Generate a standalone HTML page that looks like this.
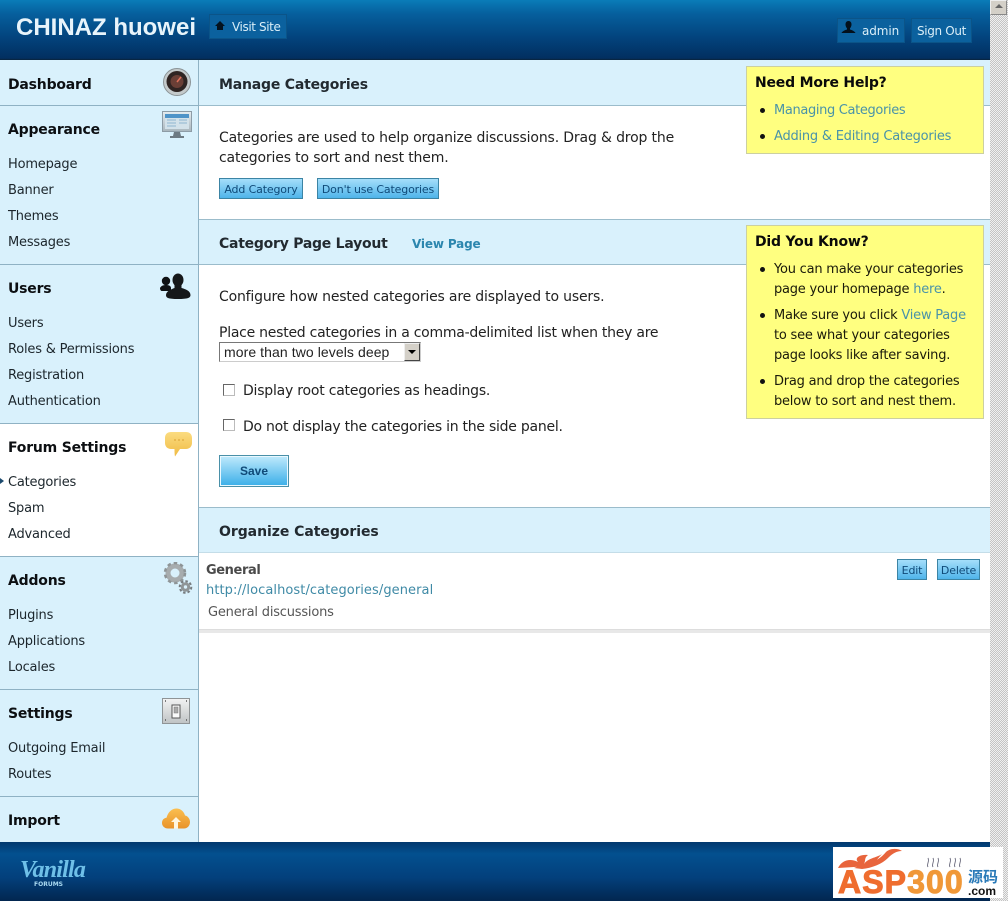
<!DOCTYPE html>
<html><head><meta charset="utf-8"><style>
html,body{margin:0;padding:0;width:1008px;height:901px;overflow:hidden;background:#fff}
body{font-family:"DejaVu Sans",sans-serif;position:relative;color:#222}
.a{position:absolute;white-space:nowrap}
.band{position:absolute;left:199px;width:791px;background:#d9f1fc;border-bottom:1px solid #9bbccb;box-sizing:border-box}
.side{position:absolute;left:0;width:198px;background:#d9f1fc;border-bottom:1px solid #8fb2c4;box-sizing:border-box}
.h{position:absolute;left:8px;font-weight:bold;font-size:14px;letter-spacing:-.2px;line-height:18px;color:#0c0f12;white-space:nowrap}
.l{position:absolute;left:8px;font-size:13px;letter-spacing:-.2px;line-height:16px;color:#1c262c;white-space:nowrap}
.mh{position:absolute;left:219px;font-weight:bold;font-size:14px;letter-spacing:-.2px;line-height:18px;color:#222a30;white-space:nowrap}
.t{position:absolute;font-size:14px;letter-spacing:-.2px;line-height:20px;color:#222;white-space:nowrap}
.btn{position:absolute;box-sizing:border-box;height:21px;border:1px solid #3c84a4;background:linear-gradient(#a5defa,#4fb4ea);color:#0f4a78;font-size:11px;letter-spacing:-.15px;line-height:21px;text-align:center;white-space:nowrap}
.hb{position:absolute;box-sizing:border-box;height:25px;background:#0b619e;border:1px solid #0b5488;color:#d9eef8;font-size:12px;line-height:24px;white-space:nowrap}
.note{position:absolute;left:746px;width:238px;box-sizing:border-box;background:#ffff80;border:1px solid #ccd0a0;color:#111}
.note b{position:absolute;left:8px;font-size:14px;letter-spacing:-.2px;line-height:18px;color:#0a0a0a;white-space:nowrap}
.note span.x{position:absolute;left:27px;font-size:13px;letter-spacing:-.22px;line-height:20px;white-space:nowrap;color:#1a1a0a}
.note i{position:absolute;left:13px;width:5px;height:5px;border-radius:50%;background:#111}
.note span.lk,.lk{color:#4a93a8}
.cb{position:absolute;left:223px;width:12px;height:12px;box-sizing:border-box;border:1px solid #666;border-right-color:#bbb;border-bottom-color:#bbb;background:#fff}
</style></head><body>
<div class="a" style="left:0;top:0;width:990px;height:60px;background:linear-gradient(#0a7cb8 0,#06609e 22%,#03457f 60%,#022f60 97%,#0a2238 100%)"></div>
<div class="a" style="left:16px;top:13px;font:bold 24px/30px 'Liberation Sans',sans-serif;color:#e8f4fb">CHINAZ huowei</div>
<div class="hb" style="left:209px;top:14px;width:78px;padding-left:22px;letter-spacing:-.4px">Visit Site</div>
<svg class="a" style="left:214px;top:20px" width="12" height="11" viewBox="0 0 12 11"><path d="M6 1 L11 6 H9 V10 H3 V6 H1 Z" fill="#04121e"/></svg>
<div class="hb" style="left:837px;top:18px;width:68px;padding-left:24px;letter-spacing:-.1px">admin</div>
<svg class="a" style="left:840px;top:20px" width="17" height="16" viewBox="0 0 17 16"><path d="M8.500 1c2 0 3 1.500 3 3.500 0 1.500-.7 3-1.500 3.800v1.200c2 .7 4.500 1.500 5.500 3.500H1.500c1-2 3.500-2.800 5.500-3.500V8.300C6.200 7.500 5.500 6 5.500 4.500 5.500 2.500 6.500 1 8.500 1z" fill="#03101c"/></svg>
<div class="hb" style="left:911px;top:18px;width:61px;text-align:center;letter-spacing:-.35px">Sign Out</div>

<div class="a" style="left:198px;top:60px;width:1px;height:782px;background:#8fb2c4"></div>
<div class="side" style="top:60px;height:46px"></div>
<div class="side" style="top:106px;height:159px"></div>
<div class="side" style="top:265px;height:159px"></div>
<div class="side" style="top:424px;height:133px;background:#fff"></div>
<div class="side" style="top:557px;height:133px"></div>
<div class="side" style="top:690px;height:107px"></div>
<div class="side" style="top:797px;height:45px;border-bottom:0"></div>

<div class="h" style="top:76px">Dashboard</div>
<div class="h" style="top:121px">Appearance</div>
<div class="l" style="top:157px">Homepage</div>
<div class="l" style="top:183px">Banner</div>
<div class="l" style="top:209px">Themes</div>
<div class="l" style="top:235px">Messages</div>
<div class="h" style="top:280px">Users</div>
<div class="l" style="top:316px">Users</div>
<div class="l" style="top:342px">Roles &amp; Permissions</div>
<div class="l" style="top:368px">Registration</div>
<div class="l" style="top:394px">Authentication</div>
<div class="h" style="top:439px">Forum Settings</div>
<div class="l" style="top:475px">Categories</div>
<div class="l" style="top:501px">Spam</div>
<div class="l" style="top:527px">Advanced</div>
<div class="h" style="top:572px">Addons</div>
<div class="l" style="top:608px">Plugins</div>
<div class="l" style="top:634px">Applications</div>
<div class="l" style="top:660px">Locales</div>
<div class="h" style="top:705px">Settings</div>
<div class="l" style="top:741px">Outgoing Email</div>
<div class="l" style="top:767px">Routes</div>
<div class="h" style="top:812px">Import</div>
<svg class="a" style="left:0;top:477px" width="4" height="8"><path d="M0 1 L4 4 L0 7Z" fill="#1c4a6e"/></svg>

<svg class="a" style="left:163px;top:68px" width="28" height="28" viewBox="0 0 28 28"><circle cx="14" cy="14" r="13.500" fill="#c4cacb" stroke="#8b9396"/><circle cx="14" cy="13.500" r="10.500" fill="#2f2422"/><circle cx="14" cy="13.500" r="6.500" fill="#6a3f36"/><path d="M14 14 L18 9" stroke="#e0705a" stroke-width="1.500"/></svg>
<svg class="a" style="left:162px;top:111px" width="30" height="28" viewBox="0 0 30 28"><defs><linearGradient id="m" x1="0" y1="0" x2="0" y2="1"><stop offset="0" stop-color="#e4ecf0"/><stop offset="1" stop-color="#a9b6bd"/></linearGradient></defs><rect x=".5" y=".5" width="29" height="20" fill="url(#m)" stroke="#8d9ca6"/><rect x="3" y="3" width="24" height="15" fill="#d3e2ea"/><rect x="3" y="3" width="24" height="4" fill="#4f94c8"/><path d="M5 9h9M5 12h9M5 15h9M17 9h8M17 12h8" stroke="#8fb6d0"/><path d="M12 21h6l1 4h3v2H8v-2h3z" fill="#6d7a82"/></svg>
<svg class="a" style="left:159px;top:273px" width="32" height="28" viewBox="0 0 32 28"><circle cx="7" cy="8" r="4.200" fill="#101214"/><path d="M1 15c1-2 3-3 6-3s5 1 5 3v3H3c-1 0-2-1-2-3z" fill="#101214"/><ellipse cx="19" cy="7" rx="5.500" ry="6.500" fill="#16181a"/><path d="M15.500 11h7v4c4 1 9 3 9 7 0 3-3 4-12.500 4S7 25 7 22c0-4 6-6 8.500-7z" fill="#16181a"/></svg>
<svg class="a" style="left:165px;top:432px" width="27" height="25" viewBox="0 0 27 25"><defs><linearGradient id="b" x1="0" y1="0" x2="0" y2="1"><stop offset="0" stop-color="#fbdc80"/><stop offset="1" stop-color="#f0bb44"/></linearGradient></defs><path d="M6 0h15c3.500 0 6 2 6 6v5c0 3.500-2.500 6-6 6h-6l-5 7.500c-.5-2-.5-5-.5-7.500H6c-3.500 0-6-2.500-6-6V6C0 2 2.500 0 6 0z" fill="url(#b)"/><path d="M9 8h2M13 8h2M17 8h2" stroke="#d89f32"/></svg>
<svg class="a" style="left:163px;top:562px" width="30" height="32" viewBox="0 0 30 32"><circle cx="12" cy="11" r="7" fill="none" stroke="#a7acae" stroke-width="5"/><circle cx="12" cy="11" r="10" fill="none" stroke="#8e9496" stroke-width="2.500" stroke-dasharray="3.500 3"/><circle cx="22.500" cy="25" r="3.200" fill="none" stroke="#8f9597" stroke-width="3"/><circle cx="22.500" cy="25" r="5.800" fill="none" stroke="#777d80" stroke-width="2" stroke-dasharray="2.500 2"/></svg>
<svg class="a" style="left:162px;top:698px" width="29" height="27" viewBox="0 0 29 27"><defs><linearGradient id="s" x1="0" y1="0" x2="0" y2="1"><stop offset="0" stop-color="#f2f3f3"/><stop offset="1" stop-color="#bfc3c4"/></linearGradient></defs><rect x=".5" y=".5" width="27" height="25" fill="url(#s)" stroke="#8f9496"/><rect x="10" y="7" width="8" height="13" fill="#fafafa" stroke="#555"/><rect x="12" y="9" width="4" height="6" fill="#aaa" stroke="#777" stroke-width=".5"/><path d="M3 3h1M24 3h1M3 22h1M24 22h1" stroke="#555" stroke-width="1.500"/></svg>
<svg class="a" style="left:162px;top:808px" width="28" height="21" viewBox="0 0 28 21"><defs><linearGradient id="c" x1="0" y1="0" x2="0" y2="1"><stop offset="0" stop-color="#fbbf50"/><stop offset="1" stop-color="#e8932a"/></linearGradient></defs><path d="M6 20.500C2.500 20.500 0 18 0 15c0-3 2-5 4.500-5.200C6 4 10 .5 14.500.5c4 0 7.500 3 8.500 7 3 .5 5 3.500 5 6.500 0 3.500-2.500 6.500-6 6.500z" fill="url(#c)"/><path d="M14 9l5 5h-3v6.500h-4V14H9z" fill="#fff6df"/></svg>

<div class="band" style="top:60px;height:46px"></div>
<div class="mh" style="top:76px">Manage Categories</div>
<div class="t" style="left:219px;top:128px;letter-spacing:-.15px">Categories are used to help organize discussions. Drag &amp; drop the</div>
<div class="t" style="left:219px;top:148px;letter-spacing:-.15px">categories to sort and nest them.</div>
<div class="btn" style="left:219px;top:178px;width:84px">Add Category</div>
<div class="btn" style="left:317px;top:178px;width:122px">Don't use Categories</div>

<div class="a" style="left:199px;top:219px;width:791px;height:1px;background:#9bbccb"></div>
<div class="band" style="top:220px;height:45px"></div>
<div class="mh" style="top:235px;letter-spacing:-.25px">Category Page Layout</div>
<div class="a" style="left:412px;top:236px;font-size:12px;letter-spacing:-.15px;line-height:16px;font-weight:bold;color:#2b86ae">View Page</div>
<div class="t" style="left:219px;top:287px;letter-spacing:-.18px">Configure how nested categories are displayed to users.</div>
<div class="t" style="left:219px;top:323px;letter-spacing:-.25px">Place nested categories in a comma-delimited list when they are</div>
<div class="a" style="left:219px;top:342px;width:202px;height:20px;box-sizing:border-box;border:1px solid #777;border-right-color:#ccc;border-bottom-color:#ccc;background:#fff;font:14px/18px 'Liberation Sans',sans-serif;letter-spacing:.08px;color:#222;padding-left:4px">more than two levels deep</div>
<div class="a" style="left:404px;top:343px;width:16px;height:18px;box-sizing:border-box;background:#d4d0c8;border:1px solid;border-color:#eee #444 #444 #eee"></div>
<svg class="a" style="left:408px;top:350px" width="8" height="5"><path d="M0 0H8L4 4Z" fill="#000"/></svg>
<div class="cb" style="top:384px"></div>
<div class="t" style="left:243px;top:381px;letter-spacing:-.22px">Display root categories as headings.</div>
<div class="cb" style="top:419px"></div>
<div class="t" style="left:243px;top:417px;letter-spacing:-.25px">Do not display the categories in the side panel.</div>
<div class="a" style="left:219px;top:455px;width:70px;height:32px;box-sizing:border-box;border:1px solid #4a90a8;box-shadow:inset 0 0 0 1px #e8f8ff;background:linear-gradient(#c0eafc,#3aaee8);color:#0f4a78;font:bold 12px/30px 'Liberation Sans',sans-serif;text-align:center">Save</div>

<div class="a" style="left:199px;top:507px;width:791px;height:1px;background:#9bbccb"></div>
<div class="band" style="top:508px;height:45px;border-bottom-color:#c4dde8"></div>
<div class="mh" style="top:523px;letter-spacing:-.05px">Organize Categories</div>
<div class="a" style="left:206px;top:563px;font-size:13px;letter-spacing:-.4px;line-height:16px;font-weight:bold;color:#4a4a4a">General</div>
<div class="a" style="left:206px;top:583px;font-size:13px;letter-spacing:.08px;line-height:16px;color:#3f8aa6">http://localhost/categories/general</div>
<div class="a" style="left:208px;top:605px;font-size:13px;letter-spacing:-.2px;line-height:16px;color:#555">General discussions</div>
<div class="btn" style="left:897px;top:559px;width:30px">Edit</div>
<div class="btn" style="left:937px;top:559px;width:43px">Delete</div>
<div class="a" style="left:199px;top:629px;width:791px;height:4px;background:#e8e8e8;border-top:1px solid #ddd;box-sizing:border-box"></div>

<div class="note" style="top:66px;height:88px">
<b style="top:7px">Need More Help?</b>
<i style="top:41px"></i><span class="x lk" style="top:34px;letter-spacing:-.35px">Managing Categories</span>
<i style="top:67px"></i><span class="x lk" style="top:60px">Adding &amp; Editing Categories</span>
</div>
<div class="note" style="top:225px;height:194px">
<b style="top:7px">Did You Know?</b>
<i style="top:41px"></i><span class="x" style="top:34px">You can make your categories</span>
<span class="x" style="top:54px">page your homepage <span class="lk">here</span>.</span>
<i style="top:87px"></i><span class="x" style="top:80px">Make sure you click <span class="lk">View Page</span></span>
<span class="x" style="top:100px">to see what your categories</span>
<span class="x" style="top:120px">page looks like after saving.</span>
<i style="top:153px"></i><span class="x" style="top:146px">Drag and drop the categories</span>
<span class="x" style="top:166px">below to sort and nest them.</span>
</div>

<div class="a" style="left:0;top:842px;width:990px;height:59px;background:linear-gradient(#02386e 0,#03508f 20%,#03407c 60%,#02264f 100%)"></div>
<div class="a" style="left:20px;top:857px;font:italic bold 24px/26px 'Liberation Serif',serif;color:#6fc0e8;letter-spacing:-.8px">Vanilla</div>
<div class="a" style="left:34px;top:881px;font:bold 6px/8px 'DejaVu Sans',sans-serif;color:#a8d8f0">FORUMS</div>

<div class="a" style="left:990px;top:0;width:18px;height:901px;background-color:#f0f0f0;background-image:linear-gradient(45deg,#c4c4c4 25%,transparent 25%,transparent 75%,#c4c4c4 75%),linear-gradient(45deg,#c4c4c4 25%,transparent 25%,transparent 75%,#c4c4c4 75%);background-size:2px 2px;background-position:0 0,1px 1px"></div>
<div class="a" style="left:990px;top:0;width:17px;height:15px;box-sizing:border-box;background:#d4d0c8;border:1px solid;border-color:#eee #888 #888 #eee"></div>
<svg class="a" style="left:995px;top:4px" width="8" height="5"><path d="M4 0L8 4H0Z" fill="#666"/></svg>

<div class="a" style="left:833px;top:847px;width:170px;height:51px;background:#fff"></div>
<svg class="a" style="left:836px;top:848px" width="70" height="22" viewBox="0 0 70 22"><path d="M2 20C6 12 14 10 22 14 18 10 24 6 32 7 28 10 30 12 28 16 32 10 40 10 46 6 42 10 40 14 34 18 M18 20C28 16 40 16 50 4 54 0 62 0 66 3 60 3 56 6 52 10 46 16 36 20 26 21Z" fill="#e8643c"/></svg>
<div class="a" style="left:838px;top:866px;font:900 32px/32px 'Liberation Sans',sans-serif;color:#ef6d2e;letter-spacing:1.100px;-webkit-text-stroke:1px #ef6d2e">ASP<span style="color:#f09838;-webkit-text-stroke-color:#f09838">300</span></div>
<svg class="a" style="left:925px;top:855px" width="40" height="14" viewBox="0 0 40 14"><path d="M3 12c-2-3 2-5 0-9M8 12c-2-3 2-5 0-9M13 12c-2-3 2-5 0-9M25 12c-2-3 2-5 0-9M30 12c-2-3 2-5 0-9M35 12c-2-3 2-5 0-9" fill="none" stroke="#778" stroke-width="1"/></svg>
<div class="a" style="left:968px;top:868px;font:bold 15px/17px 'Noto Sans CJK SC',sans-serif;color:#2a7ab8">源码</div>
<div class="a" style="left:968px;top:885px;font:bold 12px/13px 'Liberation Sans',sans-serif;color:#111">.com</div>
</body></html>
